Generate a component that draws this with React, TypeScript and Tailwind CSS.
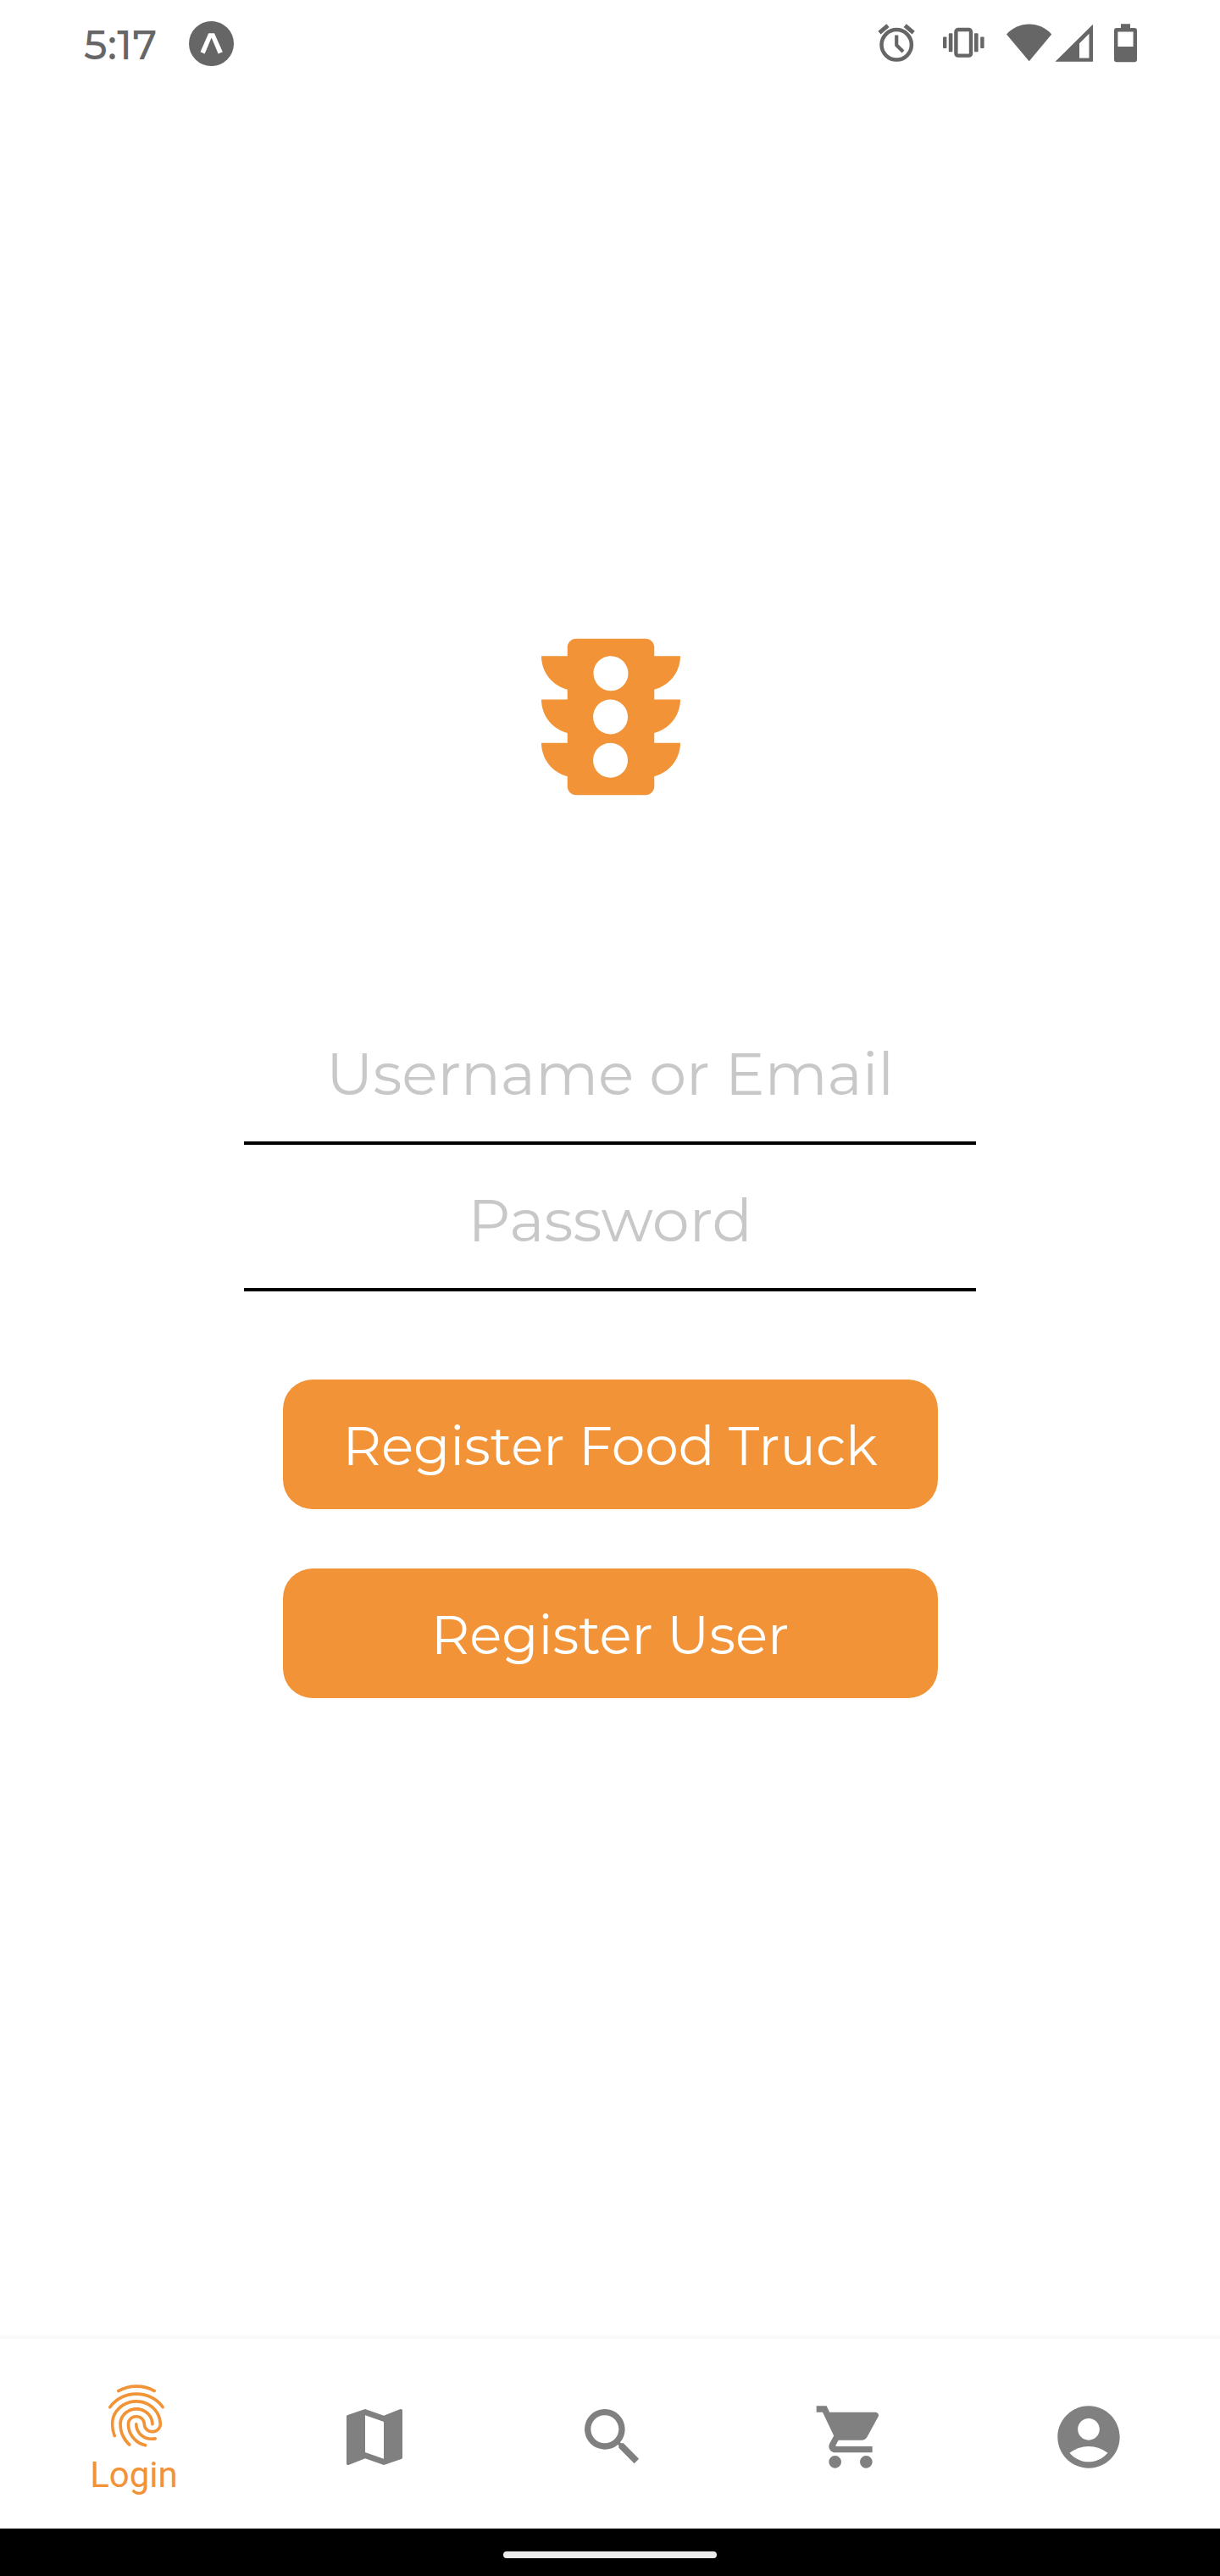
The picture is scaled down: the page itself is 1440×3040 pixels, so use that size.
import type { ReactNode } from "react";
import { MdAccountCircle, MdFingerprint, MdMap, MdSearch, MdShoppingCart, MdTraffic } from "react-icons/md";

function StatusBar() {
  return (
    <header className="flex h-[106px] items-start text-[#666666]">
      <div className="flex items-start pl-[99px]">
        <span className="mt-[23px] w-[124px] font-['Montserrat','Inter',sans-serif] text-[48px] leading-[60px] font-medium tracking-[0.4px]">
          5:17
        </span>
        <svg className="mt-[24.5px] size-[53px]" viewBox="0 0 53 53">
          <circle cx="26.5" cy="26.5" r="26.5" fill="currentColor" />
          <path d="M23.2 14.2 H30 L39.8 36.2 L34.6 38.4 L26.6 19.4 L18.6 38.4 L13.5 36.2 Z" fill="#fff" />
        </svg>
      </div>
      <div className="ml-auto flex items-start pt-[28px] pr-[98px]">
        {/* Alarm */}
        <svg className="h-[46px] w-[44px]" viewBox="0 0 44 46" fill="none" stroke="currentColor">
          <circle cx="22.2" cy="24.8" r="17.7" strokeWidth="4.5" />
          <path d="M22.2 13.5 V25.2 L30 33" strokeWidth="4.2" strokeLinejoin="round" />
          <path d="M2 10.6 L12 2.2 M42.2 10.6 L32.2 2.2" strokeWidth="5" />
        </svg>
        {/* Vibrate */}
        <svg className="ml-[33px] h-[46px] w-[49px]" viewBox="0 0 49 46" fill="currentColor">
          <rect x="0" y="15.5" width="4.4" height="13.5" rx="0.8" />
          <rect x="6.8" y="11.3" width="4.6" height="22" rx="0.8" />
          <rect x="15.4" y="7" width="17.6" height="30.6" rx="2.4" fill="none" stroke="currentColor" strokeWidth="4.4" />
          <rect x="37" y="11.3" width="4.6" height="22" rx="0.8" />
          <rect x="44.2" y="15.5" width="4.4" height="13.5" rx="0.8" />
        </svg>
        {/* Wi-Fi */}
        <svg className="ml-[26px] h-[46px] w-[54px]" viewBox="0 0 54 46" fill="currentColor">
          <path d="M0 12.4 C7.5 4.6 16.5 0.6 26.7 0.6 C37 0.6 46 4.6 53.2 12.4 L26.7 44.2 Z" />
        </svg>
        {/* Cellular signal */}
        <svg className="ml-[3px] h-[46px] w-[46px]" viewBox="0 0 46 46" fill="currentColor">
          <path fillRule="evenodd" d="M0.5 44.7 L45 0.7 V44.7 Z M29 23.2 V40.5 H40.5 V11.8 Z" />
        </svg>
        {/* Battery */}
        <svg className="ml-[24px] h-[46px] w-[27px]" viewBox="0 0 27 46" fill="currentColor">
          <path
            fillRule="evenodd"
            d="M8 0.3 H19 V4.9 H24 Q27 4.9 27 7.9 V42.2 Q27 45.2 24 45.2 H3 Q0 45.2 0 42.2 V7.9 Q0 4.9 3 4.9 H8 Z M4.4 9.4 V26.9 H22.6 V9.4 Z"
          />
        </svg>
      </div>
    </header>
  );
}

function Field({ placeholder, type }: { placeholder: string; type: string }) {
  return (
    <input
      type={type}
      placeholder={placeholder}
      className="h-[173px] w-full border-b-4 border-black bg-transparent pt-[9px] text-center text-[70px] tracking-[-0.2px] placeholder:text-[#c8c8c8] placeholder:opacity-100"
    />
  );
}

function ActionButton({ children }: { children: ReactNode }) {
  return (
    <button className="h-[153px] w-[773px] rounded-[35px] bg-[#f19336] pt-[4px] text-center text-[63px] leading-[149px] text-white">
      {children}
    </button>
  );
}

function Tab({ children, active = false }: { children: ReactNode; active?: boolean }) {
  return (
    <button
      className={
        active
          ? "flex h-full w-[281px] flex-col items-center text-[#f19336]"
          : "flex h-full w-[281px] flex-col items-center pt-[72px] text-[#808080]"
      }
    >
      {children}
    </button>
  );
}

export default function App() {
  return (
    <div className="flex h-[3040px] w-[1440px] flex-col overflow-hidden bg-white font-['Montserrat','Inter',sans-serif]">
      <StatusBar />
      <main className="flex flex-1 flex-col items-center">
        <MdTraffic className="mt-[617.3px] ml-[1.3px] size-[246px] shrink-0 text-[#f19336]" />
        <form className="mt-[208.7px] flex w-[864px] flex-col">
          <Field placeholder="Username or Email" type="text" />
          <Field placeholder="Password" type="password" />
        </form>
        <div className="mt-[104px] flex flex-col gap-[70px]">
          <ActionButton>Register Food Truck</ActionButton>
          <ActionButton>Register User</ActionButton>
        </div>
      </main>
      <div className="h-[6px] bg-linear-to-b from-white to-[#f7f7f7]" />
      <nav className="flex h-[224px] bg-white pl-[20.5px]">
        <Tab active>
          <MdFingerprint className="mt-[47px] size-[88px] shrink-0" />
          <span className="mt-[1px] -ml-[6px] font-['Roboto',sans-serif] text-[42px] leading-[50px]">Login</span>
        </Tab>
        <Tab>
          <MdMap className="size-[88px]" />
        </Tab>
        <Tab>
          <MdSearch className="size-[88px]" />
        </Tab>
        <Tab>
          <MdShoppingCart className="size-[88px]" />
        </Tab>
        <Tab>
          <MdAccountCircle className="size-[88px]" />
        </Tab>
      </nav>
      <div className="flex h-[56px] justify-center bg-black pt-[27px]">
        <div className="h-[8px] w-[252px] rounded-full bg-[#ececec]" />
      </div>
    </div>
  );
}
